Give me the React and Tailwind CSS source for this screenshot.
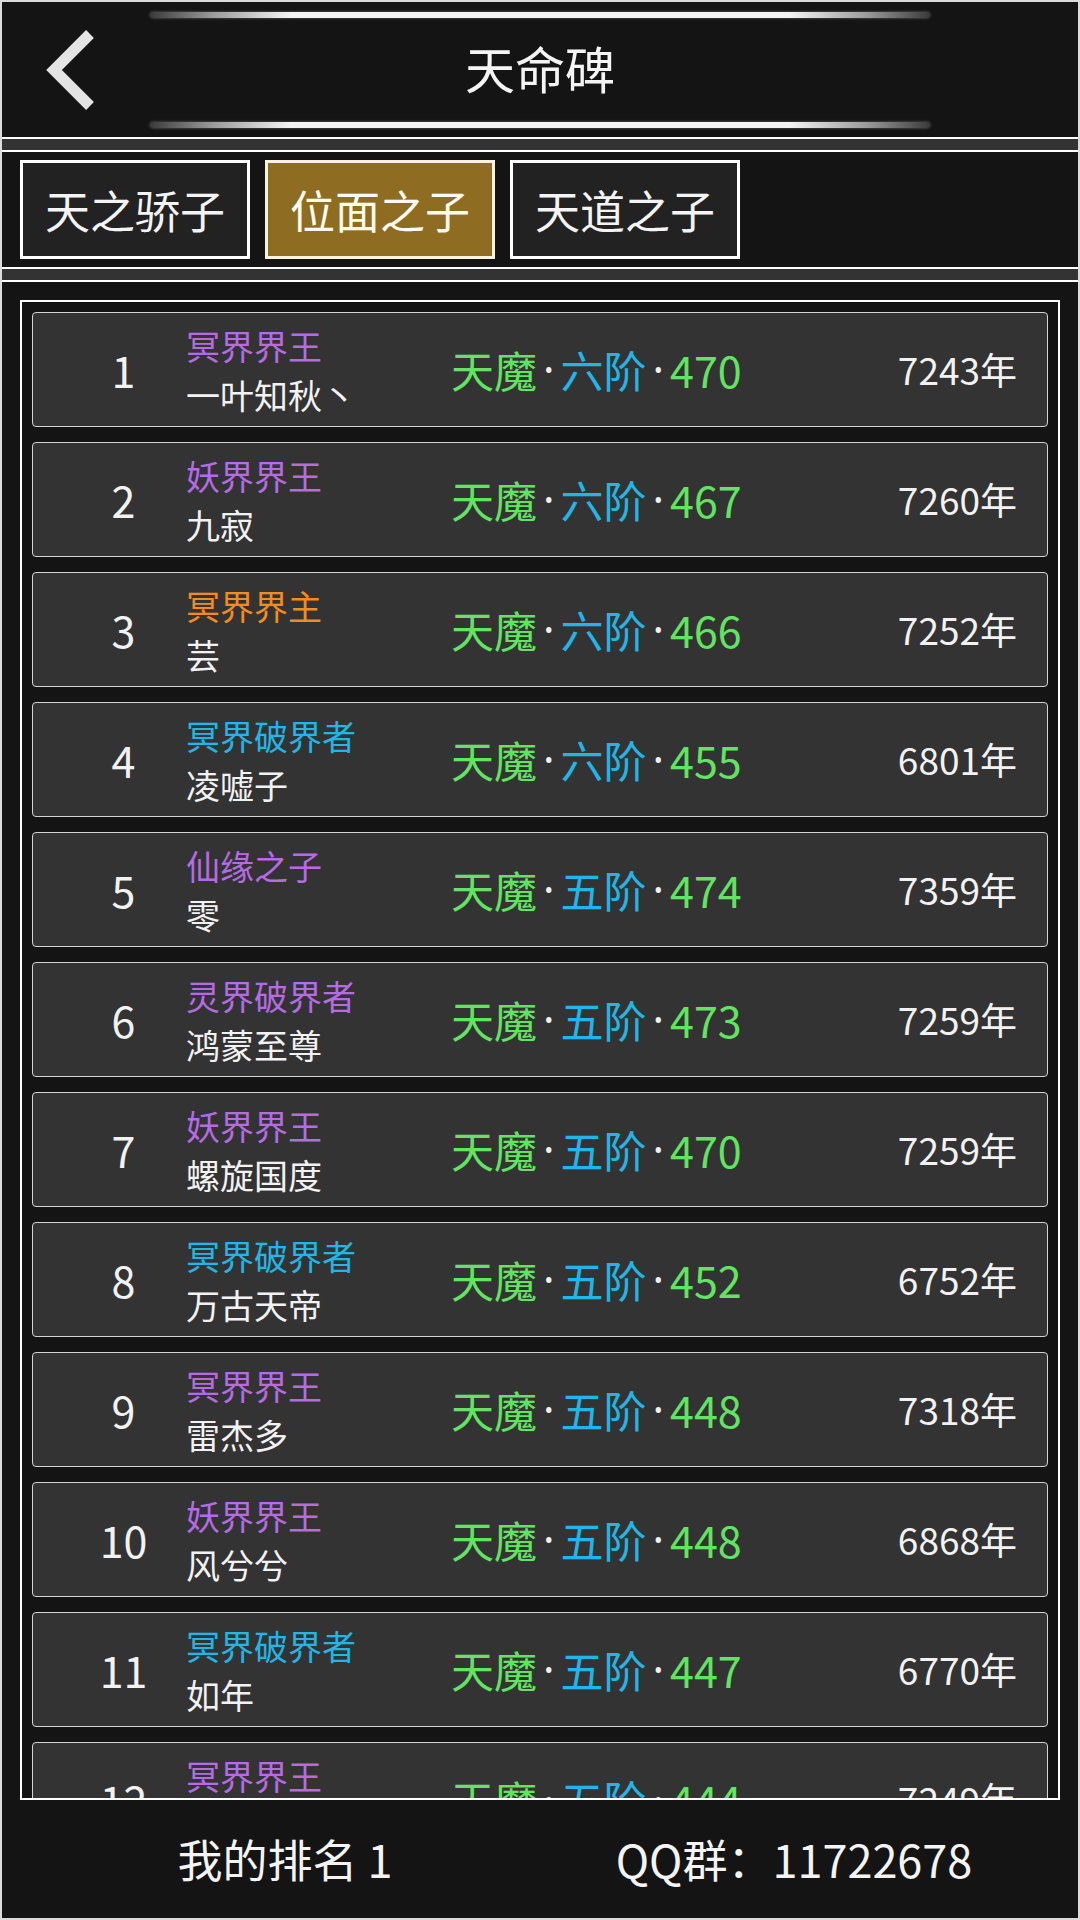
import React from 'react';

const FONT = { fontFamily: '"Noto Sans CJK SC", "Noto Sans", sans-serif' };

const PURPLE = 'text-[#b66be3]';
const CYAN = 'text-[#22b6e6]';
const ORANGE = 'text-[#f38b1f]';

const rows = [
  { rank: 1, title: '冥界界王', tc: PURPLE, name: '一叶知秋丶', stage: '六阶', score: 470, age: 7243 },
  { rank: 2, title: '妖界界王', tc: PURPLE, name: '九寂', stage: '六阶', score: 467, age: 7260 },
  { rank: 3, title: '冥界界主', tc: ORANGE, name: '芸', stage: '六阶', score: 466, age: 7252 },
  { rank: 4, title: '冥界破界者', tc: CYAN, name: '凌嘘子', stage: '六阶', score: 455, age: 6801 },
  { rank: 5, title: '仙缘之子', tc: PURPLE, name: '零', stage: '五阶', score: 474, age: 7359 },
  { rank: 6, title: '灵界破界者', tc: PURPLE, name: '鸿蒙至尊', stage: '五阶', score: 473, age: 7259 },
  { rank: 7, title: '妖界界王', tc: PURPLE, name: '螺旋国度', stage: '五阶', score: 470, age: 7259 },
  { rank: 8, title: '冥界破界者', tc: CYAN, name: '万古天帝', stage: '五阶', score: 452, age: 6752 },
  { rank: 9, title: '冥界界王', tc: PURPLE, name: '雷杰多', stage: '五阶', score: 448, age: 7318 },
  { rank: 10, title: '妖界界王', tc: PURPLE, name: '风兮兮', stage: '五阶', score: 448, age: 6868 },
  { rank: 11, title: '冥界破界者', tc: CYAN, name: '如年', stage: '五阶', score: 447, age: 6770 },
  { rank: 12, title: '冥界界王', tc: PURPLE, name: '逍遥子', stage: '五阶', score: 444, age: 7249 },
];

const tabs = ['天之骄子', '位面之子', '天道之子'];

const GlowLine = () => (
  <div className="ml-[148px] w-[780px] h-[6px] rounded-full bg-[linear-gradient(90deg,#3a3a3a_0%,#9a9a9a_8%,#f4f4f4_18%,#f4f4f4_82%,#9a9a9a_92%,#3a3a3a_100%)] shadow-[0_0_3px_rgba(255,255,255,0.35)]"></div>
);

const Separator = () => (
  <div className="h-[15px] shrink-0 border-y-2 border-white bg-[#333333]"></div>
);

// latin middle dot, narrower than the CJK one
const Dot = () => (
  <span className="px-[6px] font-['Noto_Sans'] text-[#f2f2f2]">·</span>
);

const Row = ({ r }) => (
  <div className="h-[115px] shrink-0 flex items-center rounded-[4px] border border-[#d4d4d4] bg-[#333333]">
    <div className="ml-[28px] w-[125px] text-center text-[43px] leading-none text-[#f2f2f2]">{r.rank}</div>
    <div className="w-[265px] flex flex-col text-[34px] leading-[49px]">
      <span className={r.tc}>{r.title}</span>
      <span className="text-[#f2f2f2]">{r.name}</span>
    </div>
    <div className="flex items-center text-[43px] leading-none">
      <span className="text-[#62e462]">天魔</span>
      <Dot />
      <span className={CYAN}>{r.stage}</span>
      <Dot />
      <span className="text-[#62e462]">{r.score}</span>
    </div>
    <div className="ml-auto pr-[30px] text-[37px] leading-none text-[#f2f2f2]">{r.age}年</div>
  </div>
);

export default function App() {
  return (
    <div style={FONT} className="w-[1080px] h-[1920px] border-2 border-[#dcdcdc] bg-[#141414] flex flex-col overflow-hidden text-white">
      {/* Header */}
      <div className="h-[135px] shrink-0 pt-[10px] flex flex-col">
        <GlowLine />
        <div className="h-[104px] grid grid-cols-[148px_1fr_148px] items-center">
          <div className="pl-[38px] flex items-center">
            <svg width="64" height="84" viewBox="0 0 64 84">
              <polyline points="50,6 14,42 50,78" fill="none" stroke="#e4e4e4" strokeWidth="11" strokeLinecap="butt" strokeLinejoin="miter" />
            </svg>
          </div>
          <div className="text-center text-[50px] leading-none text-[#f4f4f4] pb-[6px]">天命碑</div>
          <div></div>
        </div>
        <GlowLine />
      </div>

      <Separator />

      {/* Tabs */}
      <div className="h-[115px] shrink-0 pl-[18px] pt-[8px] flex gap-[15px]">
        {tabs.map((t, i) => (
          <div
            key={t}
            className={
              i === 1
                ? 'w-[230px] h-[99px] border-[3px] border-[#fbf3dc] bg-[#8e6c21] flex items-center justify-center text-[45px] text-[#fdfaf0]'
                : 'w-[230px] h-[99px] border-[3px] border-white bg-[#222222] flex items-center justify-center text-[45px] text-[#f4f4f4]'
            }
          >
            {t}
          </div>
        ))}
      </div>

      <Separator />

      {/* Ranking list */}
      <div className="flex-1 min-h-0 pt-[18px] px-[18px] flex flex-col">
        <div className="flex-1 min-h-0 border-2 border-white px-[10px] pt-[10px] flex flex-col gap-[15px] overflow-hidden">
          {rows.map((r) => (
            <Row key={r.rank} r={r} />
          ))}
        </div>
      </div>

      {/* Footer */}
      <div className="h-[118px] shrink-0 flex items-center text-[45px] text-[#f4f4f4]">
        <div className="w-[566px] text-center">我的排名 1</div>
        <div className="w-[452px] text-center">QQ群：11722678</div>
      </div>
    </div>
  );
}
